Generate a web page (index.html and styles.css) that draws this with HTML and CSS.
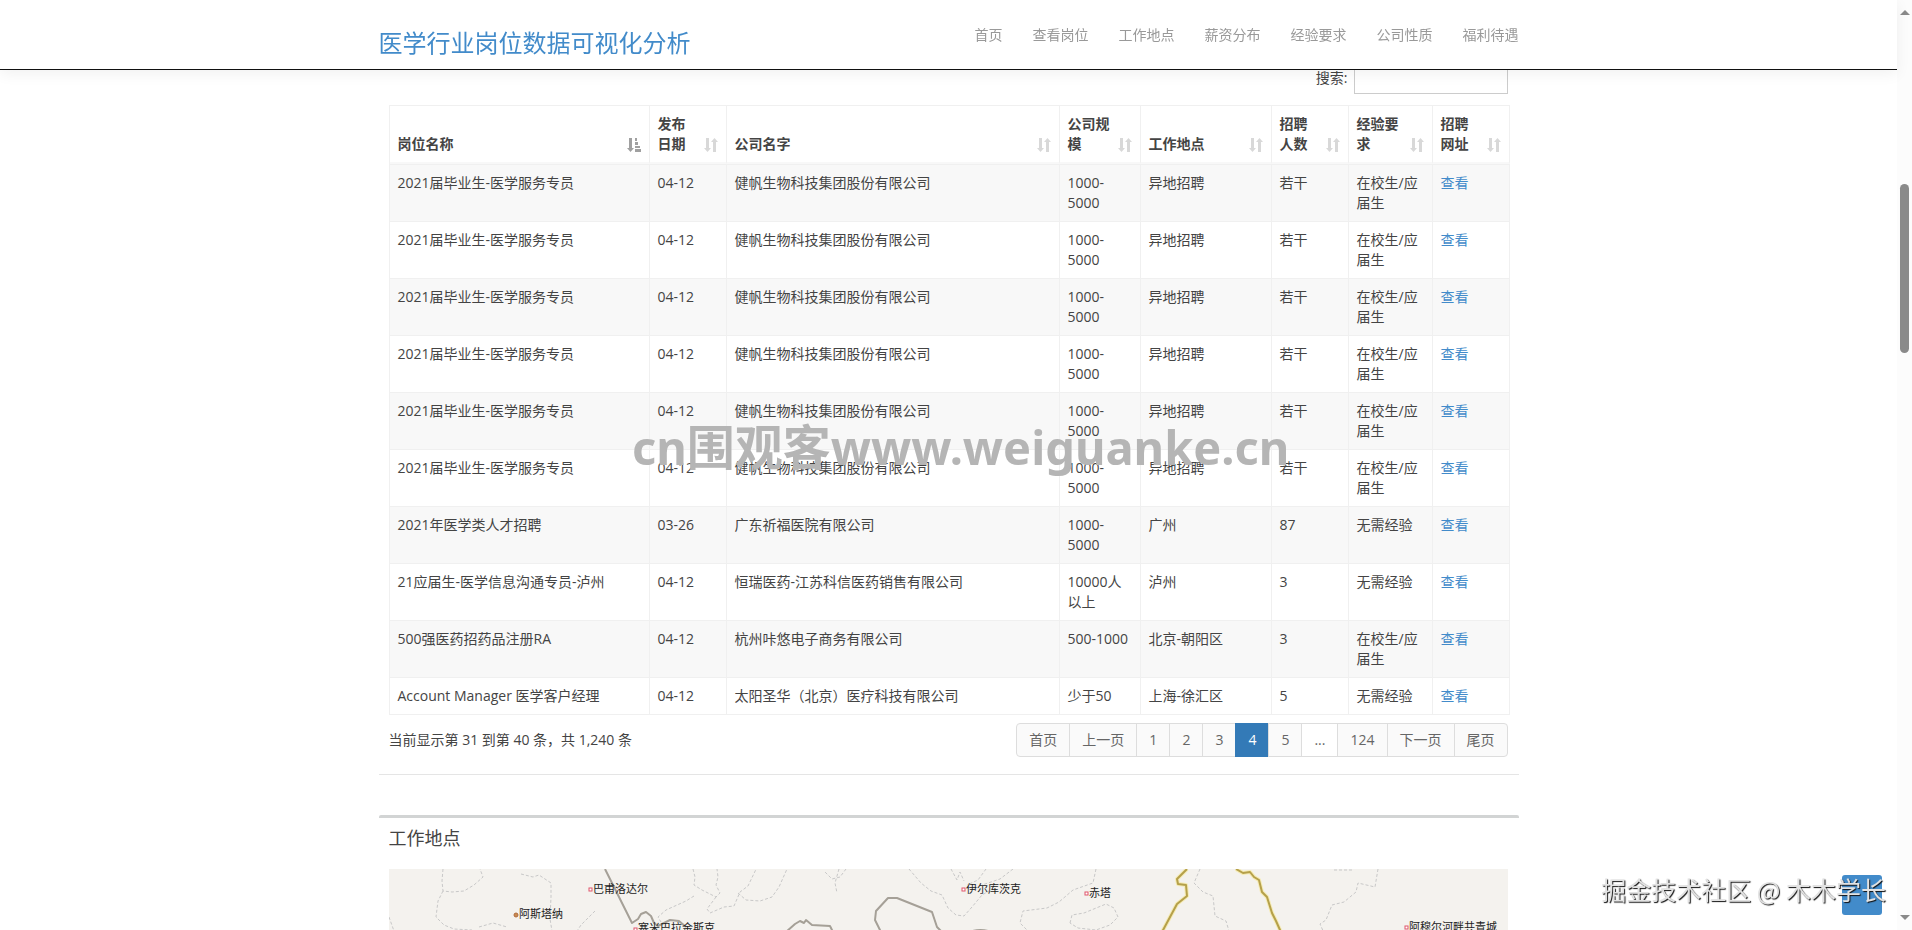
FILE: index.html
```html
<!DOCTYPE html>
<html lang="zh-CN">
<head>
    <meta charset="UTF-8">
    <meta name="viewport" content="width=device-width, initial-scale=1.0">
    <title>医学行业岗位数据可视化分析</title>
    <link rel="stylesheet" href="styles.css">
</head>
<body>
    <svg class="sprite" aria-hidden="true">
        <symbol id="sort" viewBox="0 0 14 16">
            <path d="M2 1h3v10h2l-3.500 4-3.500-4h2zM9 15h3V5h2l-3.500-4L7 5h2z"/>
        </symbol>
        <symbol id="sort-asc" viewBox="0 0 14 16">
            <path d="M2 1h3v10h2l-3.500 4-3.500-4h2zM8 1h2v3H8zM8 5h3v3H8zM8 9h5v2H8zM8 12h6v3H8z"/>
        </symbol>
    </svg>

    <header class="navbar">
        <div class="container navbar-inner">
            <a class="brand" href="#">医学行业岗位数据可视化分析</a>
            <nav class="menu">
                <a href="#home">首页</a>
                <a href="#jobs">查看岗位</a>
                <a href="#place">工作地点</a>
                <a href="#salary">薪资分布</a>
                <a href="#experience">经验要求</a>
                <a href="#company">公司性质</a>
                <a href="#welfare">福利待遇</a>
            </nav>
        </div>
    </header>

    <main class="container">
        <section class="panel" id="jobs">
            <div class="filter">
                <label for="search">搜索:</label>
                <input type="search" id="search">
            </div>
            <table class="table">
                <colgroup>
                    <col class="col-name">
                    <col class="col-small">
                    <col class="col-company">
                    <col class="col-size">
                    <col class="col-place">
                    <col class="col-small">
                    <col class="col-exp">
                    <col class="col-small">
                </colgroup>
                <thead>
                    <tr>
                        <th class="sorted">岗位名称<svg><use href="#sort-asc"/></svg></th>
                        <th>发布日期<svg><use href="#sort"/></svg></th>
                        <th>公司名字<svg><use href="#sort"/></svg></th>
                        <th>公司规模<svg><use href="#sort"/></svg></th>
                        <th>工作地点<svg><use href="#sort"/></svg></th>
                        <th>招聘人数<svg><use href="#sort"/></svg></th>
                        <th>经验要求<svg><use href="#sort"/></svg></th>
                        <th>招聘网址<svg><use href="#sort"/></svg></th>
                    </tr>
                </thead>
                <tbody>
                    <tr><td>2021届毕业生-医学服务专员</td><td>04-12</td><td>健帆生物科技集团股份有限公司</td><td>1000-5000</td><td>异地招聘</td><td>若干</td><td>在校生/应届生</td><td><a href="#">查看</a></td></tr>
                    <tr><td>2021届毕业生-医学服务专员</td><td>04-12</td><td>健帆生物科技集团股份有限公司</td><td>1000-5000</td><td>异地招聘</td><td>若干</td><td>在校生/应届生</td><td><a href="#">查看</a></td></tr>
                    <tr><td>2021届毕业生-医学服务专员</td><td>04-12</td><td>健帆生物科技集团股份有限公司</td><td>1000-5000</td><td>异地招聘</td><td>若干</td><td>在校生/应届生</td><td><a href="#">查看</a></td></tr>
                    <tr><td>2021届毕业生-医学服务专员</td><td>04-12</td><td>健帆生物科技集团股份有限公司</td><td>1000-5000</td><td>异地招聘</td><td>若干</td><td>在校生/应届生</td><td><a href="#">查看</a></td></tr>
                    <tr><td>2021届毕业生-医学服务专员</td><td>04-12</td><td>健帆生物科技集团股份有限公司</td><td>1000-5000</td><td>异地招聘</td><td>若干</td><td>在校生/应届生</td><td><a href="#">查看</a></td></tr>
                    <tr><td>2021届毕业生-医学服务专员</td><td>04-12</td><td>健帆生物科技集团股份有限公司</td><td>1000-5000</td><td>异地招聘</td><td>若干</td><td>在校生/应届生</td><td><a href="#">查看</a></td></tr>
                    <tr><td>2021年医学类人才招聘</td><td>03-26</td><td>广东祈福医院有限公司</td><td>1000-5000</td><td>广州</td><td>87</td><td>无需经验</td><td><a href="#">查看</a></td></tr>
                    <tr><td>21应届生-医学信息沟通专员-泸州</td><td>04-12</td><td>恒瑞医药-江苏科信医药销售有限公司</td><td>10000人以上</td><td>泸州</td><td>3</td><td>无需经验</td><td><a href="#">查看</a></td></tr>
                    <tr><td>500强医药招药品注册RA</td><td>04-12</td><td>杭州咔悠电子商务有限公司</td><td class="nowrap">500-1000</td><td>北京-朝阳区</td><td>3</td><td>在校生/应届生</td><td><a href="#">查看</a></td></tr>
                    <tr><td>Account Manager 医学客户经理</td><td>04-12</td><td>太阳圣华（北京）医疗科技有限公司</td><td>少于50</td><td>上海-徐汇区</td><td>5</td><td>无需经验</td><td><a href="#">查看</a></td></tr>
                </tbody>
            </table>
            <div class="table-footer">
                <p>当前显示第 31 到第 40 条，共 1,240 条</p>
                <ul class="pagination">
                    <li><a href="#">首页</a></li>
                    <li><a href="#">上一页</a></li>
                    <li><a href="#">1</a></li>
                    <li><a href="#">2</a></li>
                    <li><a href="#">3</a></li>
                    <li class="active"><a href="#">4</a></li>
                    <li><a href="#">5</a></li>
                    <li class="disabled"><a href="#">...</a></li>
                    <li><a href="#">124</a></li>
                    <li><a href="#">下一页</a></li>
                    <li><a href="#">尾页</a></li>
                </ul>
            </div>
        </section>

        <section class="panel panel-map" id="place">
            <h2>工作地点</h2>
            <svg class="map" viewBox="0 0 1120 400" preserveAspectRatio="xMinYMin slice">
                <rect width="1120" height="400" fill="#f4f2ee"/>
                <g class="province">
                    <path d="M54 0l-1 12 1 10 9 1 12-1 10-6 9-8-3-8M54 22l-5 10-2 16 8 8 10 4 18 1M132 5l12 3 6-2 12 8v14l-1 22 2 12M304 0l2 8-1 8 8 5 14 7 4-4-4-8 2-8-1-8M305 27l-8 5-20 9-8 7 3 5M327 28l-9 12 3 4 14-6 10-1 6-14 8-6 11-23M349 24l8 7 14 1 12-4 7-10 8-18M450 0l-4 14 2 10M457 0l-6 8-8 2-8-8M0 48l5 14M90 58l14-4 14 4M206 42l-14 14-4 6"/>
                    <path d="M520 0l12 14 10 8 11 4 6 13 8 7 8 1 8-9 10-12 7-4M597 0l-8 11-11 5M624 0l-13 10-18 6M562 0l6 11 3-8 4 9M707 0l-3 14-20 7-14 12-12 6-24 3-3 12 8 8M681 54l2-8 12-2 22-9 8 4 4 9-8 8-14 5-18-2zM811 0l-6 14 9 9 10 4 2 20 11 5 3 10M989 0l-3 18-17-4-2 9-12 10-12 3-6 15-6 4 4 9M945 1h18"/>
                </g>
                <g class="border-gray">
                    <path d="M216 0l27 54 6-4 3-5 5-2 5 4 3 7 4 3 12-6 9 1 7 6"/>
                    <path d="M397 63l9-8 5-3 4 2 2-3 6 5 18 1 4 8"/>
                    <path d="M492 63l-6-12 1-9 12-13h9l35 14 5 15 6 6M580 63q12-4 22 0"/>
                </g>
                <g class="border-glow">
                    <path d="M798 0l-10 10 1 5 8 1 1 11-10 8-15 28"/>
                    <path d="M847 0l7 4 7-1 4 5 5 3 3 12 5 5 5 16 4 8 4 9v4"/>
                </g>
                <g class="border-gold">
                    <path d="M798 0l-10 10 1 5 8 1 1 11-10 8-15 28"/>
                    <path d="M847 0l7 4 7-1 4 5 5 3 3 12 5 5 5 16 4 8 4 9v4"/>
                </g>
                <g class="town">
                    <rect x="200" y="19" width="3" height="3"/>
                    <rect x="245" y="59" width="3" height="3"/>
                    <rect x="573" y="19" width="3" height="3"/>
                    <rect x="696" y="23" width="3" height="3"/>
                    <rect x="1016" y="57" width="3" height="3"/>
                </g>
                <circle class="capital" cx="127" cy="46" r="2"/>
                <g class="town-name">
                    <text x="204" y="24">巴甫洛达尔</text>
                    <text x="130" y="49">阿斯塔纳</text>
                    <text x="249" y="63">塞米巴拉金斯克</text>
                    <text x="577" y="24">伊尔库茨克</text>
                    <text x="700" y="28">赤塔</text>
                    <text x="1020" y="62">阿穆尔河畔共青城</text>
                </g>
            </svg>
        </section>
    </main>

    <p class="site-mark">cn<span>围观客</span>www.weiguanke.cn</p>
    <button class="to-top" type="button" aria-label="top"></button>
    <p class="author-mark">掘金技术社区 @ 木木学长</p>

    <div class="scrollbar" aria-hidden="true">
        <div class="arrow-up"></div>
        <div class="thumb"></div>
        <div class="arrow-down"></div>
    </div>
</body>
</html>
```
FILE: styles.css
```css
* {
    box-sizing: border-box;
}

body {
    margin: 0;
    padding-right: 15px;
    height: 100vh;
    overflow: hidden;
    font-family: "Open Sans", "Noto Sans CJK SC", sans-serif;
    font-size: 14px;
    line-height: 20px;
    color: #444;
    background-color: #fff;
}

a {
    color: #428bca;
    text-decoration: none;
}

.sprite {
    display: none;
}

.container {
    width: 100%;
    max-width: 1140px;
    margin: 0 auto;
}

/* top bar */
.navbar {
    position: fixed;
    top: 0;
    left: 0;
    right: 15px;
    z-index: 10;
    height: 70px;
    background-color: #fff;
    border-bottom: 1px solid #111;
    box-shadow: 0 4px 14px rgba(0, 0, 0, 0.06);
}

.navbar-inner {
    display: flex;
    justify-content: space-between;
}

.brand {
    padding-top: 27px;
    font-size: 24px;
    line-height: 32px;
}

.menu {
    display: flex;
    gap: 30px;
    padding-top: 25px;
}

.menu a {
    color: #999;
}

main {
    padding-top: 64px;
}

.panel {
    padding: 0 11px 0 10px;
}

#jobs {
    padding-bottom: 17px;
    border-bottom: 1px solid #e5e5e5;
}

.filter {
    display: flex;
    justify-content: flex-end;
    align-items: flex-start;
    gap: 6px;
    margin-bottom: 11px;
}

.filter label {
    padding-top: 4px;
}

.filter input {
    width: 154px;
    height: 30px;
    padding: 5px 10px;
    border: 1px solid #ccc;
    background-color: #fff;
}

/* job table */
.table {
    width: 100%;
    table-layout: fixed;
    border: 1px solid #f0f0f0;
    border-right: none;
    border-spacing: 0;
}

.col-name { width: 260px; }
.col-small { width: 77px; }
.col-company { width: 333px; }
.col-size { width: 81px; }
.col-place { width: 131px; }
.col-exp { width: 84px; }

.table th,
.table td {
    padding: 8px;
    border-right: 1px solid #f0f0f0;
    text-align: left;
    vertical-align: top;
}

.table th {
    position: relative;
    padding-right: 30px;
    border-bottom: 2px solid #f8f8f8;
    vertical-align: bottom;
}

.table th svg {
    position: absolute;
    right: 8px;
    bottom: 9px;
    width: 14px;
    height: 16px;
    fill: #d8d8d8;
}

.table .sorted svg {
    fill: #a0a0a0;
}

.table td {
    border-top: 1px solid #f0f0f0;
}

.table tbody tr:nth-child(odd) {
    background-color: #f8f8f8;
}

.nowrap {
    white-space: nowrap;
}

.table-footer {
    display: flex;
    justify-content: space-between;
    padding-top: 8px;
}

.table-footer p {
    margin: 7px 0 0;
}

.pagination {
    display: flex;
    margin: 0;
    padding: 0 0 0 1px;
    list-style: none;
}

.pagination a {
    display: block;
    margin-left: -1px;
    padding: 6px 12px;
    border: 1px solid #ddd;
    color: #666;
    background-color: #fafafa;
}

.pagination li:first-child a {
    border-radius: 4px 0 0 4px;
}

.pagination li:last-child a {
    border-radius: 0 4px 4px 0;
}

.pagination .active a {
    color: #fff;
    background-color: #337ab7;
    border-color: #337ab7;
}

.pagination .disabled a {
    background-color: #fff;
}

/* map */
.panel-map {
    margin-top: 40px;
    border-top: 3px solid #d2d4d4;
    border-radius: 2px;
}

.panel-map h2 {
    margin: 0;
    padding: 8px 0 19px;
    font-size: 18px;
    font-weight: normal;
    line-height: 24px;
}

.map {
    display: block;
    width: 100%;
    height: 400px;
}

.map path {
    fill: none;
    stroke-linejoin: round;
}

.province {
    stroke: #c8c8c8;
    stroke-dasharray: 3 2;
}

.border-gray {
    stroke: #a5a097;
    stroke-width: 2;
}

.border-glow {
    stroke: #f5ebb4;
    stroke-width: 4;
}

.border-gold {
    stroke: #b5a04a;
    stroke-width: 2;
}

.town {
    fill: #fff;
    stroke: #e0546a;
}

.capital {
    fill: #c98a50;
    stroke: #b06c3c;
}

.town-name {
    font-size: 11px;
    fill: #222;
}

/* overlays */
.site-mark {
    position: fixed;
    top: 415px;
    left: calc(50% - 324px);
    z-index: 20;
    margin: 0;
    font-family: "Noto Sans", "Noto Sans CJK SC", sans-serif;
    font-size: 47px;
    font-weight: bold;
    line-height: 64px;
    white-space: nowrap;
    color: #b5b5b5;
}

.site-mark span {
    font-size: 48px;
}

.to-top {
    position: fixed;
    right: 30px;
    bottom: 15px;
    width: 40px;
    height: 40px;
    padding: 0;
    border: none;
    border-radius: 3px;
    background-color: #428bca;
}

.author-mark {
    position: fixed;
    right: 26px;
    bottom: 23px;
    z-index: 20;
    margin: 0;
    font-family: "Noto Sans CJK SC", sans-serif;
    font-size: 25px;
    line-height: 36px;
    color: #e2e2e2;
    text-shadow: 1px 1px 1px #111;
}

.scrollbar {
    position: fixed;
    top: 0;
    right: 0;
    bottom: 0;
    display: flex;
    flex-direction: column;
    align-items: center;
    width: 15px;
    padding: 10px 0;
    background-color: #fcfcfc;
}

.arrow-up,
.arrow-down {
    border: 5px solid transparent;
    border-top: none;
    border-bottom: 5px solid #8a8a8a;
}

.arrow-down {
    margin-top: auto;
    border-top: 5px solid #8a8a8a;
    border-bottom: none;
}

.thumb {
    width: 9px;
    height: 169px;
    margin-top: 169px;
    border-radius: 5px;
    background-color: #8a8a8a;
}
```
